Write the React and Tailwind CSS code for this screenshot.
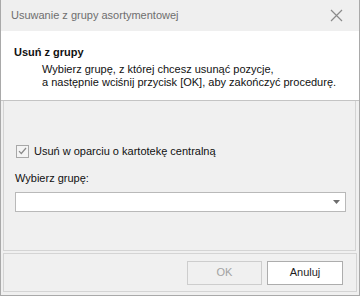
import React from "react";

export default function App() {
  const font = { fontFamily: '"Liberation Sans", Arial, sans-serif' };
  return (
    <div
      className="w-[360px] h-[296px] flex flex-col bg-[#f0f0f0] border-x border-b border-[#a9a9a9] text-[11px] text-[#111] overflow-hidden"
      style={font}
    >
      {/* Title bar */}
      <div className="h-[31px] shrink-0 flex items-center justify-between pl-[10px] pr-[16px] bg-[#efefef]">
        <span className="text-[#6e6e6e] text-[11px]">Usuwanie z grupy asortymentowej</span>
        <svg width="13" height="13" viewBox="0 0 13 13" className="shrink-0">
          <path d="M1 1L12 12M12 1L1 12" stroke="#8a8a8a" strokeWidth="1.2" fill="none" />
        </svg>
      </div>
      {/* Header */}
      <div className="h-[70px] shrink-0 bg-white border-b border-[#c4c4c4] pt-[13px]">
        <div className="pl-[13px] font-bold leading-[16px] text-[11px]">Usuń z grupy</div>
        <div className="pl-[41px] pt-[3px] leading-[13px]">
          <div>Wybierz grupę, z której chcesz usunąć pozycje,</div>
          <div>a następnie wciśnij przycisk [OK], aby zakończyć procedurę.</div>
        </div>
      </div>
      {/* Body */}
      <div className="flex-1 flex flex-col ml-[2px] mr-[3px] border-x border-b border-[#d4d4d4] px-[11px] pt-[43px]">
        <label className="flex items-center gap-[5px] h-[14px]">
          <span className="w-[13px] h-[13px] ml-[1px] border border-[#a8a8a8] bg-[#f4f4f4] flex items-center justify-center">
            <svg width="9" height="8" viewBox="0 0 9 8">
              <path d="M1 4.2L3.3 6.5L8 1" stroke="#8a8a8a" strokeWidth="1.2" fill="none" />
            </svg>
          </span>
          <span>Usuń w oparciu o kartotekę centralną</span>
        </label>
        <div className="mt-[12px] leading-[16px]">Wybierz grupę:</div>
        <div className="mt-[6px] h-[20px] w-[331px] bg-white border border-[#b9b9b9] flex items-center justify-end pr-[5px]">
          <svg width="7" height="4" viewBox="0 0 7 4">
            <path d="M0 0H7L3.5 4Z" fill="#6d6d6d" />
          </svg>
        </div>
      </div>
      {/* Footer */}
      <div className="h-[44px] shrink-0 px-[2px] pt-[2px] pb-[3px]">
        <div className="h-full border border-[#d4d4d4] flex items-center justify-end gap-[5px] pr-[13px]">
          <button className="w-[75px] h-[24px] border border-[#cdcdcd] bg-[#f0f0f0] text-[#a2a2a2] text-[11px]">OK</button>
          <button className="w-[76px] h-[24px] border border-[#adadad] bg-white text-[#1e1e1e] text-[11px]">Anuluj</button>
        </div>
      </div>
    </div>
  );
}
